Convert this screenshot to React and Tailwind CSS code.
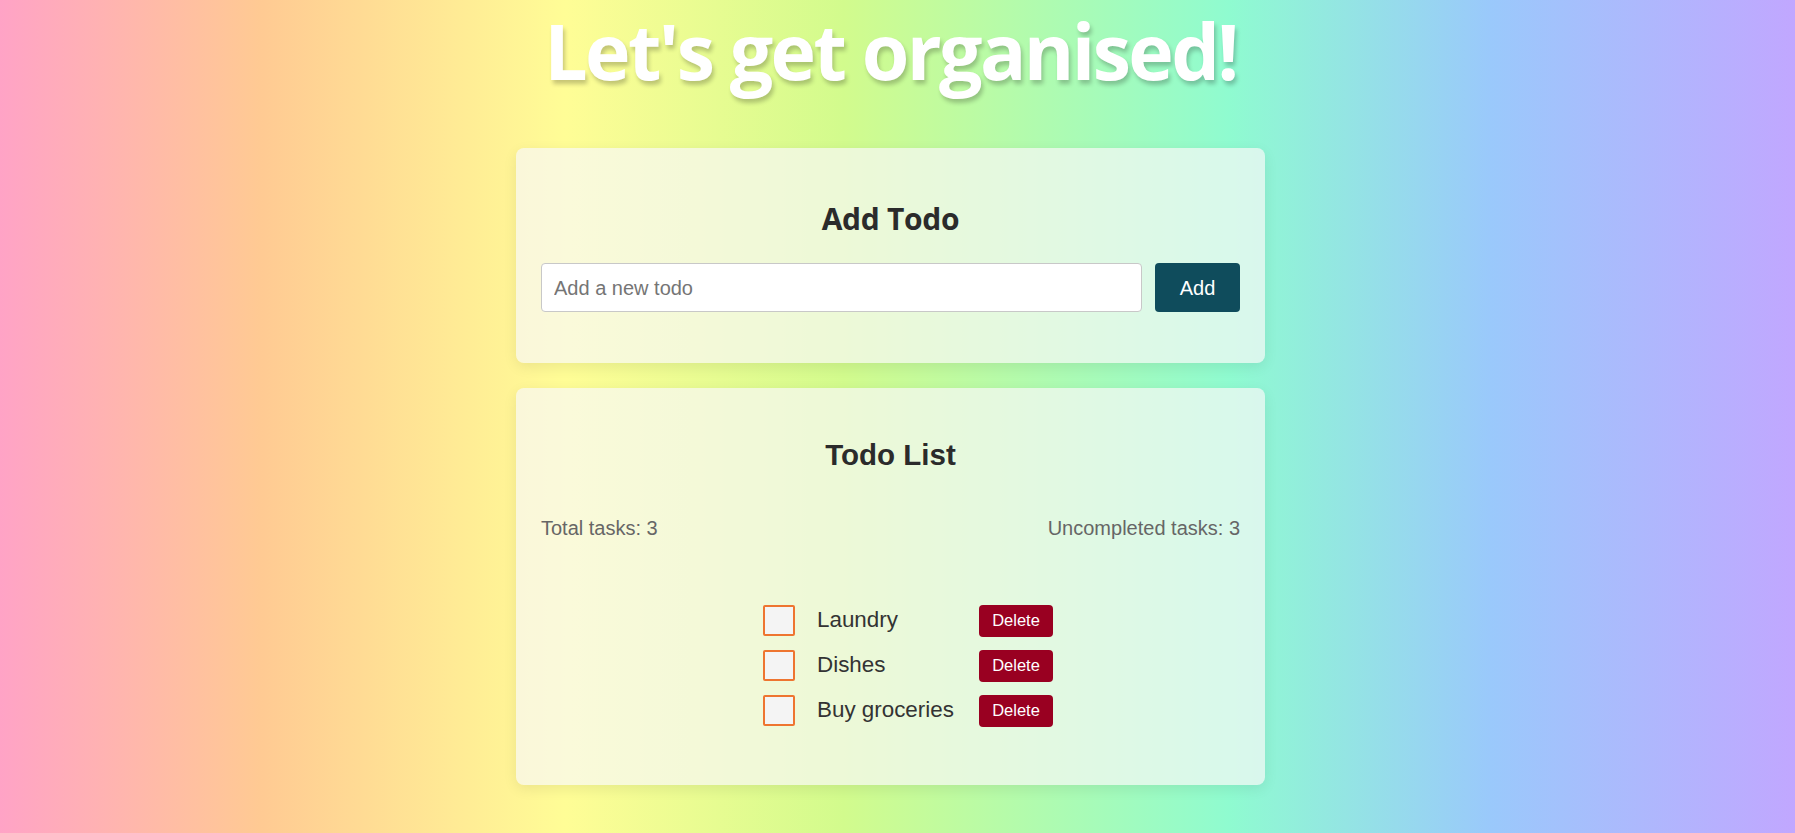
import { useState } from "react";

const initialTodos = [
  { id: 1, text: "Laundry", done: false },
  { id: 2, text: "Dishes", done: false },
  { id: 3, text: "Buy groceries", done: false },
];

const TodoItem = ({ todo, onToggle, onDelete }) => {
  return (
    <li className="flex items-center h-[32px]">
      <input
        type="checkbox"
        checked={todo.done}
        onChange={() => onToggle(todo.id)}
        className="appearance-none w-[32px] h-[31px] border-2 border-[#ee7530] bg-[#f4f4f4] rounded-[2px] checked:bg-[#ee7530]"
      />
      <span className="ml-[22px] w-[162px] text-[22.4px] leading-none text-[#333]">
        {todo.text}
      </span>
      <button
        onClick={() => onDelete(todo.id)}
        className="w-[74px] h-[32px] rounded-[4px] bg-[#990021] text-white text-[16.5px] leading-none"
      >
        Delete
      </button>
    </li>
  );
};

export default function App() {
  const [todos, setTodos] = useState(initialTodos);
  const [newTodo, setNewTodo] = useState("");

  const addTodo = (e) => {
    e.preventDefault();
    if (!newTodo.trim()) return;
    setTodos([...todos, { id: Date.now(), text: newTodo, done: false }]);
    setNewTodo("");
  };
  const toggleTodo = (id) =>
    setTodos(todos.map((t) => (t.id === id ? { ...t, done: !t.done } : t)));
  const deleteTodo = (id) => setTodos(todos.filter((t) => t.id !== id));

  const uncompleted = todos.filter((t) => !t.done).length;

  return (
    <div className="min-h-screen pb-10 pr-[14px] bg-[linear-gradient(to_right,#ffa3c6_0%,#ffca93_14.5%,#fffd96_31.5%,#d2fb8d_47%,#8ffbd0_68.5%,#9ac9fb_83%,#c1a7ff_100%)] font-['Liberation_Sans',Arial,sans-serif]">
      <h1 className="pt-[12px] text-center text-white font-bold text-[77px] leading-none tracking-[-0.034em] font-['Open_Sans','Noto_Sans',sans-serif] [text-shadow:2px_4px_4px_rgba(0,0,0,0.22)]">
        Let's get organised!
      </h1>

      <div className="mx-auto mt-[59px] w-[749px] flex flex-col gap-[25px]">
        <div className="rounded-lg bg-[rgba(248,248,246,0.7)] shadow-[0_4px_14px_rgba(0,0,0,0.08)] px-[25px] pt-[56px] pb-[51px]">
          <h2 className="text-center text-[30px] leading-none font-bold text-[#2b2b2b] tracking-[-0.01em] font-['Open_Sans','Noto_Sans',sans-serif]">
            Add Todo
          </h2>
          <form onSubmit={addTodo} className="mt-[29px] flex gap-[13px] h-[49px]">
            <input
              value={newTodo}
              onChange={(e) => setNewTodo(e.target.value)}
              placeholder="Add a new todo"
              className="flex-1 bg-white border border-[#c8c8c8] rounded-[4px] px-[12px] text-[20px] text-[#333] placeholder:text-[#757575] outline-none"
            />
            <button
              type="submit"
              className="w-[85px] rounded-[4px] bg-[#0f4c5c] text-white text-[20px]"
            >
              Add
            </button>
          </form>
        </div>

        <div className="rounded-lg bg-[rgba(248,248,246,0.7)] shadow-[0_4px_14px_rgba(0,0,0,0.08)] px-[25px] pt-[52px] pb-[58px]">
          <h2 className="text-center text-[29.5px] leading-none font-bold text-[#2b2b2b]">
            Todo List
          </h2>
          <div className="mt-[48px] flex justify-between text-[20px] leading-none text-[#666]">
            <span>Total tasks: {todos.length}</span>
            <span>Uncompleted tasks: {uncompleted}</span>
          </div>
          <ul className="mt-[67px] pl-[222px] flex flex-col gap-[13px]">
            {todos.map((todo) => (
              <TodoItem
                key={todo.id}
                todo={todo}
                onToggle={toggleTodo}
                onDelete={deleteTodo}
              />
            ))}
          </ul>
        </div>
      </div>
    </div>
  );
}
